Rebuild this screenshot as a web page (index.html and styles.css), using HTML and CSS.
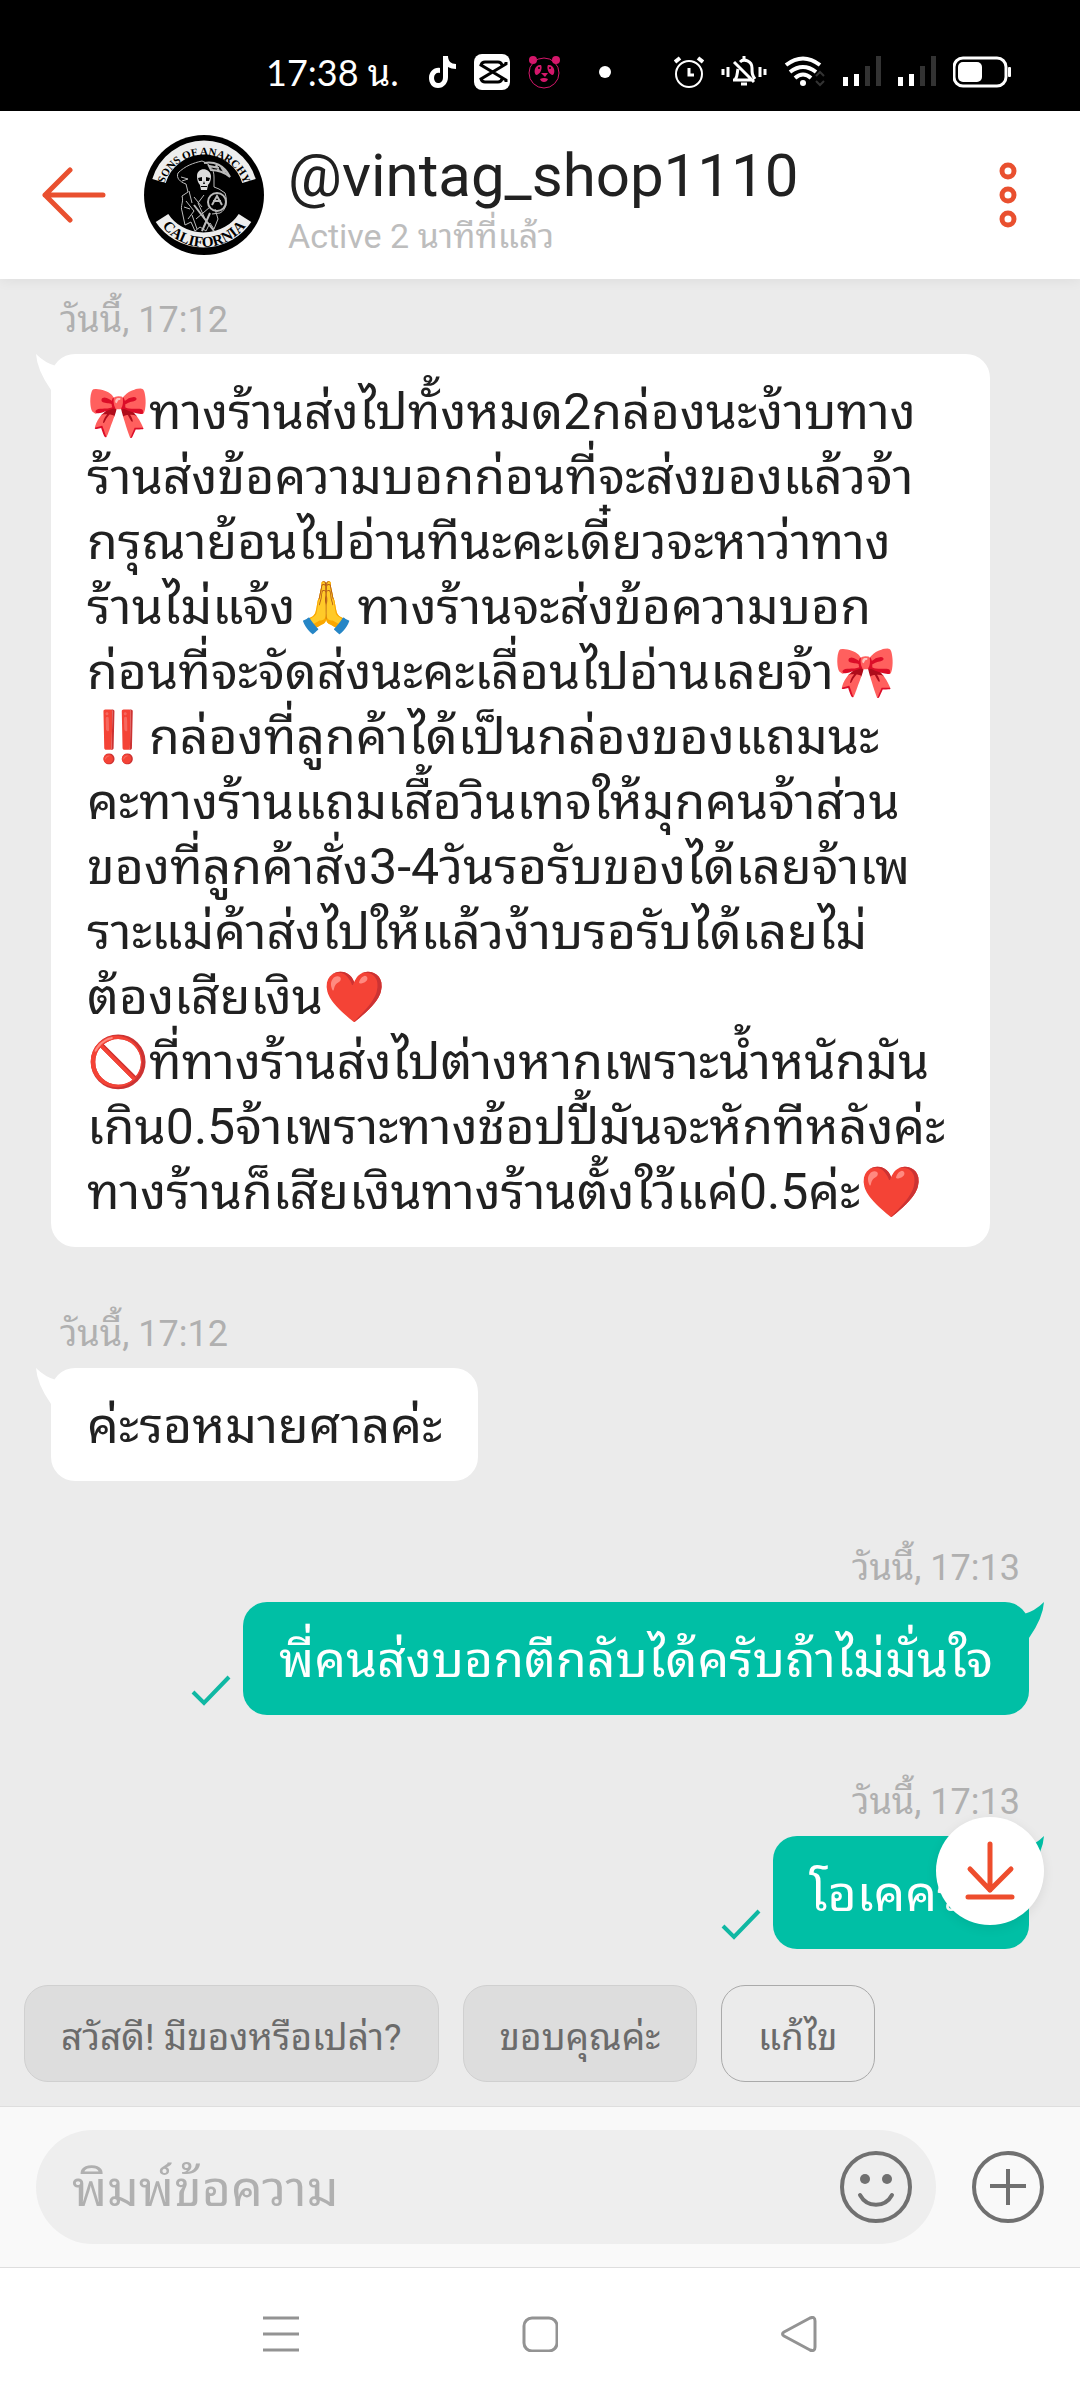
FILE: index.html
```html
<!DOCTYPE html>
<html lang="th">
    <head>
        <meta charset="UTF-8">
        <meta name="viewport" content="width=device-width, initial-scale=1">
        <title>@vintag_shop1110</title>
        <link rel="stylesheet" href="styles.css">
    </head>
    <body>
        <div class="status">
            <div class="status-left">
                <span class="clock">17:38 น.</span>
                <svg width="27" height="32" viewBox="0 0 27 32" fill="#fff"><path d="M14 0h5c0 5 3 8 8 8v5c-3 0-6-1-8-2v10c0 6-4 11-10 11S0 27 0 22c0-6 5-11 11-10v5c-3-1-6 1-6 5 0 3 2 5 4 5 3 0 5-2 5-6z"/></svg>
                <svg width="36" height="36" viewBox="0 0 36 36"><rect width="36" height="36" rx="8" fill="#fff"/><path d="M32 8v2L7 25q1 3 4 3h13q3 0 4-3M32 28v-2L7 11q1-3 4-3h13q3 0 4 3" fill="none" stroke="#000" stroke-width="3"/></svg>
                <svg width="33" height="36" viewBox="0 0 33 36" fill="#d5176b"><circle cx="16" cy="19" r="15" fill="none" stroke="#d5176b" stroke-width="1"/><circle cx="5" cy="6" r="4"/><circle cx="28" cy="6" r="4"/><path d="M8 21c-3-3-1-11 5-10 2 3-1 10-5 10zM25 21c3-3 1-11-5-10-2 3 1 10 5 10z"/><path d="M13 19h7l-3 4zM12 25q4-2 8 0-1 3-4 3t-4-3z"/><circle cx="11" cy="14" r="1" fill="#000"/><circle cx="22" cy="14" r="1" fill="#000"/></svg>
                <span class="more"></span>
            </div>
            <div class="status-right">
                <svg width="30" height="32" viewBox="0 0 30 32" fill="none" stroke="#fff" stroke-width="2"><circle cx="15" cy="18" r="13"/><path d="M15 12v7h5" stroke-width="3"/><path d="M1 6l5-4M29 6l-5-4" stroke-width="4"/></svg>
                <svg width="46" height="32" viewBox="0 0 46 32" fill="none" stroke="#fff" stroke-width="3"><path d="M2 13v6M7 11v10M39 11v10M44 13v6M12 24h18M14 24c3-4 2-8 3-11M19 6c4-4 12-1 12 6 0 5 0 7 3 11M13 6l20 20"/><path d="M23 0v4M20 28h6" stroke-width="3"/></svg>
                <svg width="42" height="32" viewBox="0 0 42 32" fill="none" stroke="#fff" stroke-width="4"><path d="M2 9q17-13 34 0M6 16q13-10 26 0M11 22q8-7 16 0"/><circle cx="19" cy="27" r="3" fill="#fff" stroke="none"/><path d="M32 20l4-4 4 4M32 25l4 4 4-4" stroke="#333" stroke-width="2"/></svg>
                <svg width="38" height="32" viewBox="0 0 38 32"><path d="M0 21h5v9H0zM11 18h5v12h-5z" fill="#fff"/><path d="M22 10h5v20h-5zM33 0h5v30h-5z" fill="#333"/></svg>
                <svg width="38" height="32" viewBox="0 0 38 32"><path d="M0 21h5v9H0zM11 18h5v12h-5z" fill="#fff"/><path d="M22 10h5v20h-5zM33 0h5v30h-5z" fill="#333"/></svg>
                <svg width="58" height="32" viewBox="0 0 58 32" fill="#fff"><rect x="1" y="2" width="52" height="28" rx="9" fill="none" stroke="#fff" stroke-width="3"/><rect x="5" y="6" width="24" height="20" rx="5"/><rect x="55" y="11" width="3" height="10" rx="1"/></svg>
            </div>
        </div>

        <header class="header">
            <button class="icon-btn" aria-label="Back">
                <svg width="64" height="56" viewBox="0 0 64 56" fill="none" stroke="#e9502f" stroke-width="5" stroke-linecap="round" stroke-linejoin="round"><path d="M61 28H3M28 3L3 28l25 25"/></svg>
            </button>
            <svg class="avatar" viewBox="0 0 120 120">
                <defs>
                    <path id="arcTop" d="M18 62A42 42 0 0 1 102 62"/>
                    <path id="arcBottom" d="M12 80a52 52 0 0 0 96 0"/>
                </defs>
                <circle cx="60" cy="60" r="60"/>
                <path d="M15 46A47 47 0 0 1 105 46" fill="none" stroke="#eee" stroke-width="14"/>
                <path d="M18 83a49 47 0 0 0 83 0" fill="none" stroke="#eee" stroke-width="15"/>
                <text class="patch-top"><textPath href="#arcTop" startOffset="50%">SONS OF ANARCHY</textPath></text>
                <text class="patch-bottom"><textPath href="#arcBottom" startOffset="50%">CALIFORNIA</textPath></text>
                <g fill="none" stroke="#bbb" stroke-width="1">
                    <path d="M58 26c-9 2-17 5-24 12-2 5 2 9 8 11l2 8-6 4c2 6-2 10 0 15l3 14 6-3 4 9 5-4 6 4 4-8 4 6 4-10-3-10"/>
                    <path d="M58 26c8 3 12 8 12 16v10l5 2 6 4c3 9 1 17-5 20l-8 1"/>
                    <path d="M60 28c10-2 20 2 26 14-6-5-12-7-19-7l-2-4 10 2M72 30l3 6M77 32l4 6" stroke-width="2"/>
                    <path d="M37 42l7 2M38 46l6-2M45 56l3 12M42 66l8 10-6 8M48 80l5 14M60 60l-6 8 8 18-4 10M40 72l6 2M50 62l8 10M52 84l14-12"/>
                    <circle cx="73" cy="67" r="9" stroke-width="2"/>
                    <path d="M68 70l5-9 5 9M69 66h8M50 70l20 26M66 78l-8 18" stroke-width="2"/>
                </g>
                <path d="M53 41c0-9 13-9 14 0 0 4-1 7-3 9l-1 5h-6l-1-5c-2-2-3-5-3-9z" fill="#ddd"/>
                <path d="M54 43l4-1v4h-3zM62 42l4 1-1 3h-3zM60 46l1 3h-2zM57 51h6v1h-6z"/>
            </svg>
            <div class="who">
                <h1 class="name">@vintag_shop1110</h1>
                <p class="active">Active 2 นาทีที่แล้ว</p>
            </div>
            <button class="icon-btn" aria-label="Menu">
                <svg width="18" height="66" viewBox="0 0 18 66" fill="none" stroke="#e9502f" stroke-width="5"><circle cx="9" cy="9" r="6"/><circle cx="9" cy="33" r="6"/><circle cx="9" cy="57" r="6"/></svg>
            </button>
        </header>

        <main class="chat">
            <div class="message">
                <time class="time">วันนี้, 17:12</time>
                <div class="bubble long">
                    <svg class="tail" viewBox="0 0 20 36"><path d="M0 0q9 9 20 12v24h-5Q1 16 0 0z"/></svg>
                    <p>🎀ทางร้านส่งไปทั้งหมด2กล่องนะง้าบทาง<br>
                    ร้านส่งข้อความบอกก่อนที่จะส่งของแล้วจ้า<br>
                    กรุณาย้อนไปอ่านทีนะคะเดี๋ยวจะหาว่าทาง<br>
                    ร้านไม่แจ้ง🙏ทางร้านจะส่งข้อความบอก<br>
                    ก่อนที่จะจัดส่งนะคะเลื่อนไปอ่านเลยจ้า🎀<br>
                    ‼️กล่องที่ลูกค้าได้เป็นกล่องของแถมนะ<br>
                    คะทางร้านแถมเสื้อวินเทจให้มุกคนจ้าส่วน<br>
                    ของที่ลูกค้าสั่ง3-4วันรอรับของได้เลยจ้าเพ<br>
                    ราะแม่ค้าส่งไปให้แล้วง้าบรอรับได้เลยไม่<br>
                    ต้องเสียเงิน❤️<br>
                    🚫ที่ทางร้านส่งไปต่างหากเพราะน้ำหนักมัน<br>
                    เกิน0.5จ้าเพราะทางช้อปปี้มันจะหักทีหลังค่ะ<br>
                    ทางร้านก็เสียเงินทางร้านตั้งใว้แค่0.5ค่ะ❤️</p>
                </div>
            </div>
            <div class="message">
                <time class="time">วันนี้, 17:12</time>
                <div class="bubble">
                    <svg class="tail" viewBox="0 0 20 36"><path d="M0 0q9 9 20 12v24h-5Q1 16 0 0z"/></svg>
                    <p>ค่ะรอหมายศาลค่ะ</p>
                </div>
            </div>
            <div class="message mine">
                <time class="time">วันนี้, 17:13</time>
                <div class="row">
                    <svg class="check" width="40" height="32" viewBox="0 0 40 32"><path d="M2 17l11 11L38 2"/></svg>
                    <div class="bubble">
                        <svg class="tail" viewBox="0 0 20 36"><path d="M20 0q-9 9-20 12v24h5Q19 16 20 0z"/></svg>
                        <p>พี่คนส่งบอกตีกลับได้ครับถ้าไม่มั่นใจ</p>
                    </div>
                </div>
            </div>
            <div class="message mine">
                <time class="time">วันนี้, 17:13</time>
                <div class="row">
                    <svg class="check" width="40" height="32" viewBox="0 0 40 32"><path d="M2 17l11 11L38 2"/></svg>
                    <div class="bubble">
                        <svg class="tail" viewBox="0 0 20 36"><path d="M20 0q-9 9-20 12v24h5Q19 16 20 0z"/></svg>
                        <p>โอเคครับ</p>
                    </div>
                </div>
            </div>
            <button class="to-bottom" aria-label="Scroll down">
                <svg width="50" height="60" viewBox="0 0 50 60" fill="none" stroke="#ee4d2d" stroke-width="5" stroke-linecap="round" stroke-linejoin="round"><path d="M25 3v46M5 28l20 21 21-21M3 56h44"/></svg>
            </button>
        </main>

        <div class="replies">
            <button class="chip">สวัสดี! มีของหรือเปล่า?</button>
            <button class="chip">ขอบคุณค่ะ</button>
            <button class="chip edit">แก้ไข</button>
        </div>

        <form class="composer">
            <div class="field">
                <input type="text" class="text" placeholder="พิมพ์ข้อความ" aria-label="พิมพ์ข้อความ">
                <button type="button" class="icon-btn" aria-label="Emoji">
                    <svg width="72" height="72" viewBox="0 0 72 72" fill="none" stroke="#707070" stroke-width="4"><circle cx="36" cy="36" r="34"/><path d="M20 44c7 13 25 13 32 0" stroke-linecap="round"/><circle cx="25" cy="28" r="5" fill="#707070" stroke="none"/><circle cx="47" cy="28" r="5" fill="#707070" stroke="none"/></svg>
                </button>
            </div>
            <button type="button" class="icon-btn" aria-label="Add">
                <svg width="72" height="72" viewBox="0 0 72 72" fill="none" stroke="#707070" stroke-width="4"><circle cx="36" cy="36" r="34"/><path d="M36 18v36M18 35h36"/></svg>
            </button>
        </form>

        <nav class="nav">
            <button class="icon-btn" aria-label="Recent">
                <svg width="36" height="36" viewBox="0 0 36 36" stroke="#939393" stroke-width="3"><path d="M0 2h36M0 18h36M0 34h36"/></svg>
            </button>
            <button class="icon-btn" aria-label="Home">
                <svg width="36" height="36" viewBox="0 0 36 36" fill="none" stroke="#939393" stroke-width="3"><rect x="2" y="2" width="33" height="33" rx="8"/></svg>
            </button>
            <button class="icon-btn" aria-label="Back">
                <svg width="36" height="36" viewBox="0 0 36 36" fill="none" stroke="#939393" stroke-width="3" stroke-linejoin="round"><path d="M3 16L29 2q5-2 5 3v26q0 5-5 3L3 20q-3-2 0-4z"/></svg>
            </button>
        </nav>
    </body>
</html>
```
FILE: styles.css
```css
* {
    box-sizing: border-box;
}
body {
    margin: 0;
    min-height: 100vh;
    display: flex;
    flex-direction: column;
    background: #ebebeb;
    color: #212121;
    font-family: Roboto, "Noto Sans Thai Looped", "Noto Sans Thai", "Noto Sans", sans-serif;
}
h1, p {
    margin: 0;
    font-weight: normal;
}
svg {
    display: block;
    flex: none;
}
button {
    border: 0;
    padding: 0;
    font-family: inherit;
    cursor: pointer;
}
.icon-btn {
    background: none;
}

.status {
    display: flex;
    justify-content: space-between;
    align-items: center;
    height: 111px;
    padding: 32px 69px 0 266px;
    background: #000;
    color: #fff;
}
.status-left, .status-right {
    display: flex;
    align-items: center;
    gap: 18px;
}
.status-right {
    gap: 17px;
}
.clock {
    margin-right: 12px;
    font-family: Lato, "Noto Sans Thai Looped", "Noto Sans Thai", sans-serif;
    font-size: 36px;
    line-height: 40px;
}
.more {
    width: 12px;
    height: 12px;
    margin-left: 20px;
    border-radius: 50%;
    background: #fff;
}

.header {
    display: flex;
    align-items: center;
    height: 168px;
    padding: 0 63px 0 42px;
    background: #fff;
    box-shadow: 0 2px 12px rgba(0, 0, 0, .06);
    z-index: 1;
}
.avatar {
    width: 120px;
    height: 120px;
    margin: 0 24px 0 38px;
}
.patch-top, .patch-bottom {
    font-family: "Liberation Serif", serif;
    font-weight: bold;
    font-size: 11px;
    text-anchor: middle;
}
.patch-bottom {
    font-size: 15px;
}
.who {
    flex: 1;
    padding-top: 10px;
}
.name {
    font-size: 60px;
    line-height: 72px;
}
.active {
    font-size: 34px;
    line-height: 48px;
    color: #bdbdbd;
}

.chat {
    position: relative;
    flex: 1;
    display: flex;
    flex-direction: column;
    gap: 63px;
    padding: 17px 51px 0;
}
.message {
    display: flex;
    flex-direction: column;
    align-items: flex-start;
}
.mine {
    align-items: flex-end;
}
.time {
    margin: 0 9px 10px;
    font-size: 36px;
    line-height: 48px;
    color: #b0b0b0;
}
.row {
    display: flex;
    align-items: flex-end;
    gap: 12px;
}
.check {
    margin-bottom: 8px;
    fill: none;
    stroke: #0fb8a3;
    stroke-width: 4;
}
.bubble {
    position: relative;
    padding: 26px 36px 22px;
    border-radius: 24px;
    background: #fff;
    font-size: 50px;
    line-height: 65px;
    white-space: nowrap;
}
.long {
    width: 96%;
}
.mine .bubble {
    background: #00bfa5;
    color: #fff;
}
.tail {
    position: absolute;
    top: 0;
    left: -15px;
    width: 20px;
    height: 36px;
    fill: #fff;
}
.mine .tail {
    left: auto;
    right: -15px;
    fill: #00bfa5;
}
.to-bottom {
    position: absolute;
    right: 36px;
    bottom: 36px;
    display: flex;
    justify-content: center;
    align-items: center;
    width: 108px;
    height: 108px;
    border-radius: 50%;
    background: #fff;
    box-shadow: 0 3px 12px rgba(0, 0, 0, .08);
}

.replies {
    display: flex;
    gap: 24px;
    padding: 24px;
}
.chip {
    height: 97px;
    padding: 0 36px;
    border: 1px solid #d0d0d0;
    border-radius: 24px;
    background: #ddd;
    color: #6b6b6b;
    font-size: 37px;
}
.edit {
    border-color: #aaa;
    background: none;
}

.composer {
    display: flex;
    align-items: center;
    gap: 36px;
    padding: 23px 36px;
    border-top: 1px solid #dedede;
    border-bottom: 1px solid #dedede;
    background: #f9f9f9;
}
.field {
    flex: 1;
    display: flex;
    align-items: center;
    height: 114px;
    padding: 0 24px 0 36px;
    border-radius: 57px;
    background: #eee;
}
.text {
    flex: 1;
    min-width: 0;
    padding: 4px 0 0;
    border: 0;
    outline: 0;
    background: none;
    font-family: inherit;
    font-size: 50px;
    line-height: 72px;
}
.text::placeholder {
    color: #b0b0b0;
}

.nav {
    display: flex;
    justify-content: center;
    align-items: center;
    height: 132px;
    background: #fff;
}
.nav .icon-btn {
    width: 24%;
    display: flex;
    justify-content: center;
}
```
